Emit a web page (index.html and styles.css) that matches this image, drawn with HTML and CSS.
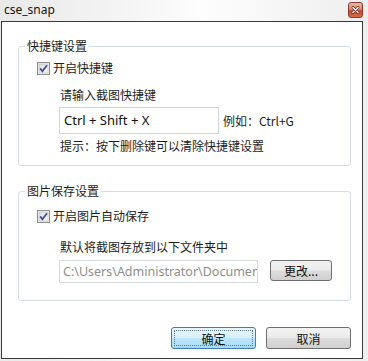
FILE: index.html
```html
<!DOCTYPE html>
<html>
<head>
<meta charset="utf-8">
<link rel="stylesheet" href="styles.css">
</head>
<body>
<div class="window">
  <div class="titlebar">
    <span class="title">cse_snap</span>
    <span class="close">
      <svg width="15" height="16" viewBox="0 0 15 16">
        <path d="M4.5 5 L10.5 11 M10.5 5 L4.5 11" stroke="#5a1a10" stroke-width="3" stroke-linecap="round"/>
        <path d="M4.5 5 L10.5 11 M10.5 5 L4.5 11" stroke="#ffffff" stroke-width="1.6" stroke-linecap="round"/>
      </svg>
    </span>
  </div>
  <div class="client">
    <fieldset class="group g1">
      <legend>快捷键设置</legend>
      <div class="inner">
        <div class="check">
          <svg class="box" width="13" height="13" viewBox="0 0 13 13">
            <defs><linearGradient id="cb1" x1="0" y1="0" x2="1" y2="1"><stop offset="0" stop-color="#dcdcdc"/><stop offset="1" stop-color="#fbfbfb"/></linearGradient></defs>
            <rect x="0.5" y="0.5" width="12" height="12" fill="#f4f4f4" stroke="#8f8f8f"/>
            <rect x="2" y="2" width="9" height="9" fill="url(#cb1)" stroke="#b9b9b9" stroke-width="0.6"/>
            <path d="M3.2 6.4 L5.4 9.2 L10 3.2" fill="none" stroke="#3c5295" stroke-width="1.8"/>
          </svg>
          <span>开启快捷键</span>
        </div>
        <div class="indent">
          <div class="line l1">请输入截图快捷键</div>
          <div class="keyrow">
            <div class="field key">Ctrl + Shift + X</div>
            <span class="eg">例如：Ctrl+G</span>
          </div>
          <div class="line l3">提示：按下删除键可以清除快捷键设置</div>
        </div>
      </div>
    </fieldset>
    <fieldset class="group g2">
      <legend>图片保存设置</legend>
      <div class="inner">
        <div class="check">
          <svg class="box" width="13" height="13" viewBox="0 0 13 13">
            <defs><linearGradient id="cb2" x1="0" y1="0" x2="1" y2="1"><stop offset="0" stop-color="#dcdcdc"/><stop offset="1" stop-color="#fbfbfb"/></linearGradient></defs>
            <rect x="0.5" y="0.5" width="12" height="12" fill="#f4f4f4" stroke="#8f8f8f"/>
            <rect x="2" y="2" width="9" height="9" fill="url(#cb2)" stroke="#b9b9b9" stroke-width="0.6"/>
            <path d="M3.2 6.4 L5.4 9.2 L10 3.2" fill="none" stroke="#3c5295" stroke-width="1.8"/>
          </svg>
          <span>开启图片自动保存</span>
        </div>
        <div class="indent">
          <div class="line l4">默认将截图存放到以下文件夹中</div>
          <div class="pathrow">
            <div class="field path">C:\Users\Administrator\Documents</div>
            <div class="btn change">更改...</div>
          </div>
        </div>
      </div>
    </fieldset>
    <div class="buttons">
      <div class="btn ok"><span class="focus">确定</span></div>
      <div class="btn cancel">取消</div>
    </div>
  </div>
</div>
</body>
</html>
```
FILE: styles.css
```css
html, body {
  margin: 0;
  padding: 0;
}
body {
  width: 368px;
  height: 361px;
  overflow: hidden;
  font-family: "Noto Sans", "Noto Sans CJK SC", sans-serif;
  font-size: 12px;
  color: #1e1e1e;
}
.window {
  width: 368px;
  height: 361px;
  background: linear-gradient(90deg, #e9e9e9 0%, #f7f7f7 40%, #fdfdfd 55%, #eeeeee 100%);
  display: flex;
  flex-direction: column;
}
.titlebar {
  height: 21px;
  display: flex;
  align-items: flex-start;
  justify-content: space-between;
  padding-left: 4px;
}
.title {
  font-family: "Noto Sans", sans-serif;
  font-size: 12px;
  line-height: 19px;
  color: #141414;
}
.close {
  width: 15px;
  height: 16px;
  margin: 2px 5px 0 0;
  border: 1px solid #8a3a2e;
  border-radius: 3px;
  background: linear-gradient(180deg, #eab5a6 0%, #d98a70 45%, #c4472c 55%, #d76a4c 100%);
  box-sizing: border-box;
  display: flex;
  align-items: center;
  justify-content: center;
}
.close svg {
  width: 13px;
  height: 14px;
}
.client {
  margin-left: 1px;
  width: 362px;
  height: 338px;
  box-sizing: border-box;
  border: 1px solid #3a3a3a;
  background: #ffffff;
  padding-left: 16px;
  padding-top: 16px;
}
.group {
  margin: 0;
  padding: 0;
  width: 333px;
  box-sizing: border-box;
  border: 1px solid #d5dfe5;
  border-radius: 3px;
  min-width: 0;
}
.group legend {
  margin-left: 6px;
  padding: 0 2px;
  line-height: 16px;
  height: 16px;
  font-family: "Noto Sans CJK SC", sans-serif;
  font-size: 12px;
}
.g1 .inner {
  padding: 6px 0 11px 18px;
}
.g2 {
  margin-top: 17px;
}
.g2 .inner {
  padding: 9px 0 17px 18px;
}
.check {
  display: flex;
  align-items: center;
  height: 16px;
  font-family: "Noto Sans CJK SC", sans-serif;
  line-height: 16px;
}
.check .box {
  margin-right: 3px;
  flex: none;
}
.indent {
  padding-left: 23px;
  font-family: "Noto Sans CJK SC", sans-serif;
}
.line {
  line-height: 16px;
  height: 16px;
}
.l1 {
  margin-top: 11px;
}
.keyrow {
  margin-top: 4px;
  display: flex;
  align-items: center;
}
.field {
  box-sizing: border-box;
  border: 1px solid #d0d6de;
  background: #fff;
  white-space: nowrap;
  overflow: hidden;
  font-family: "Noto Sans", "Noto Sans CJK SC", sans-serif;
}
.key {
  width: 160px;
  height: 27px;
  line-height: 25px;
  padding-left: 4px;
  font-size: 13px;
  color: #111;
  margin-left: -1px;
}
.eg {
  margin-left: 4px;
  font-family: "Noto Sans CJK SC", sans-serif;
  font-size: 12px;
}
.l3 {
  margin-top: 4px;
}
.l4 {
  margin-top: 15px;
}
.pathrow {
  margin-top: 5px;
  display: flex;
  align-items: flex-start;
}
.path {
  width: 199px;
  height: 23px;
  line-height: 21px;
  padding-left: 3px;
  font-size: 12.5px;
  color: #8f8f8f;
  margin-left: -1px;
  border-color: #d9dcdf;
}
.btn {
  box-sizing: border-box;
  display: flex;
  align-items: center;
  justify-content: center;
  border: 1px solid #707070;
  border-radius: 3px;
  background: linear-gradient(180deg, #f2f2f2 0%, #ebebeb 48%, #dddddd 52%, #cfcfcf 100%);
  font-family: "Noto Sans CJK SC", sans-serif;
  font-size: 12px;
  color: #111;
}
.change {
  margin-left: 12px;
  width: 62px;
  height: 21px;
}
.buttons {
  display: flex;
  justify-content: flex-end;
  width: 333px;
  margin-top: 26px;
  gap: 10px;
}
.ok, .cancel {
  width: 85px;
  height: 22px;
}
.ok {
  border-color: #3c7fb1;
  background: linear-gradient(180deg, #eaf6fd 0%, #d9f0fc 48%, #bee6fd 52%, #a7d9f5 100%);
  padding: 2px;
}
.ok .focus {
  box-sizing: border-box;
  width: 100%;
  height: 100%;
  border: 1px dotted #5d7c93;
  display: flex;
  align-items: center;
  justify-content: center;
}
```
